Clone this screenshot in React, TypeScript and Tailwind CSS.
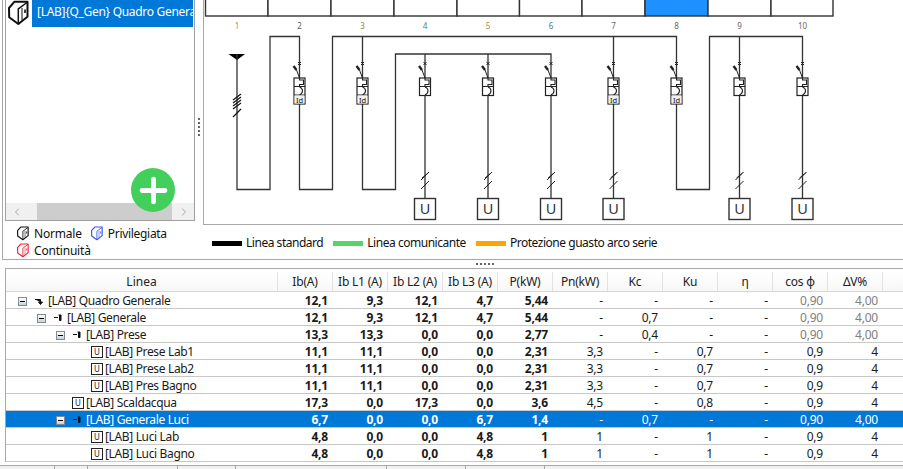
import { ChevronLeft, ChevronRight, Plus } from 'lucide-react';

const font = { fontFamily: '"Noto Sans", sans-serif' };

const colX = [237, 299.5, 362.5, 425, 488, 551, 613.5, 676.5, 739.5, 802.5];
const colEdges = [205.5, 268, 331, 394, 457, 519.5, 582, 645, 708, 771, 833];
const numColors = ['#b08a60', '#5a5a5a', '#a07c50', '#4a7a9a', '#a8864f', '#4a7a9a', '#666666', '#666666', '#666666', '#666666'];

const Breaker = ({ x, id }: { x: number; id: boolean }) => (
  <g fill="none" stroke="#222" strokeWidth={1}>
    <path d={`M${x - 1.5} 62 l3 3 M${x + 1.5} 62 l-3 3`} />
    <path d={`M${x - 6} 66 L${x - 3} 70`} strokeWidth={2.4} />
    <path d={`M${x - 3} 70 L${x} 78`} />
    <rect x={x - 5.5} y={78} width={11} height={id ? 26 : 17.5} fill="#fff" stroke="#222" strokeWidth={1.2} />
    <path d={`M${x - 5.5} 86.5 h11`} />
    <path d={`M${x} 78 v2 h4 v4.5 h-4 v2`} strokeWidth={1.1} />
    <path d={`M${x} 87 c4 1.5 4 6 0 8`} strokeWidth={1.1} />
    {id && (
      <>
        <path d={`M${x - 5.5} 95 h11`} />
        <rect x={x - 5} y={95.5} width={10} height={8} fill="#f0f0f0" stroke="none" />
        <text x={x} y={102.5} textAnchor="middle" fontSize={7.5} fill="#111" stroke="none" style={font}>
          Id
        </text>
      </>
    )}
  </g>
);

const Slashes = ({ x }: { x: number }) => (
  <path d={`M${x - 4} 180 L${x + 4} 172 M${x - 4} 189 L${x + 4} 181 M${x - 3} 178 L${x + 3} 173`} stroke="#222" strokeWidth={1} fill="none" />
);

const UserBox = ({ x }: { x: number }) => (
  <g>
    <rect x={x - 10.5} y={198.5} width={21} height={21} fill="#fff" stroke="#333" strokeWidth={1.4} />
    <text x={x} y={214} textAnchor="middle" fontSize={14} fill="#333" style={{ fontFamily: '"Liberation Sans", sans-serif' }}>
      U
    </text>
  </g>
);

const Diagram = () => (
  <svg width={699} height={224} viewBox="204 0 699 224" className="block">
    {colEdges.slice(0, -1).map((x, i) => (
      <rect key={x} x={x} y={-3} width={colEdges[i + 1] - x} height={19} fill={i === 7 ? '#1e90ff' : '#fff'} stroke="#333" strokeWidth={1.4} />
    ))}
    {colX.map((x, i) => (
      <text key={x} x={x} y={29} textAnchor="middle" fontSize={8} fill={numColors[i]} style={font}>
        {i + 1}
      </text>
    ))}
    <path d="M228.5 54 H245 L237 60 Z" fill="#000" />
    <path
      d="M237 54 V189.5 H270 V36.5 H299.5 V78 M299.5 104 V189.5 H332.5 V36.5 H676.5 V78 M362.5 36.5 V78 M362.5 104 V189.5 H395.5 V54 H551 V78 M425 54 V78 M488 54 V78 M425 95 V199 M488 95 V199 M551 95 V199 M613.5 36.5 V78 M613.5 104 V199 M676.5 104 V189.5 H709.5 V36.5 H802.5 V78 M739.5 36.5 V78 M739.5 95 V199 M802.5 95 V199"
      fill="none"
      stroke="#333"
      strokeWidth={1.3}
    />
    <path d="M233 100 L241 94 M233 103 L241 97 M233 106 L241 100 M233 109 L241 103 M233 117 L241 109" stroke="#111" strokeWidth={1.2} fill="none" />
    <Breaker x={299.5} id />
    <Breaker x={362.5} id />
    <Breaker x={425} id={false} />
    <Breaker x={488} id={false} />
    <Breaker x={551} id={false} />
    <Breaker x={613.5} id />
    <Breaker x={676.5} id />
    <Breaker x={739.5} id={false} />
    <Breaker x={802.5} id={false} />
    {[425, 488, 551, 613.5, 739.5, 802.5].map((x) => (
      <g key={x}>
        <Slashes x={x} />
        <UserBox x={x} />
      </g>
    ))}
  </svg>
);

const Cabinet = ({ color, className }: { color: string; className: string }) => (
  <svg viewBox="0 0 21 26" className={className} fill="none" stroke={color}>
    <path d="M1 8 L6.5 1.7 H19.5 V16.7 L10.3 24 L1.2 17.3 Z" strokeWidth={2} strokeLinejoin="round" />
    <path d="M10.3 23.5 V9 L19 2.5" strokeWidth={1.5} />
    <path d="M14 20 V8" strokeWidth={1} />
    <path d="M17 9.5 v3.5" strokeWidth={1.6} />
  </svg>
);

const Dots = ({ vertical }: { vertical?: boolean }) => (
  <div className={vertical ? 'flex flex-col gap-[2px]' : 'flex gap-[2px]'}>
    {[0, 1, 2, 3, 4].map((i) => (
      <span key={i} className="h-[2px] w-[2px] bg-[#666666]" />
    ))}
  </div>
);

const LegendLine = ({ color, label }: { color: string; label: string }) => (
  <div className="flex items-center gap-[4px]">
    <span className={`h-[5px] w-[30px] ${color}`} />
    <span>{label}</span>
  </div>
);

type Row = {
  name: string;
  level: number;
  leaf?: boolean;
  vals: string[];
  selected?: boolean;
  calc?: boolean;
};

const rows: Row[] = [
  { name: '[LAB] Quadro Generale', level: 0, calc: true, vals: ['12,1', '9,3', '12,1', '4,7', '5,44', '-', '-', '-', '-', '0,90', '4,00'] },
  { name: '[LAB] Generale', level: 1, calc: true, vals: ['12,1', '9,3', '12,1', '4,7', '5,44', '-', '0,7', '-', '-', '0,90', '4,00'] },
  { name: '[LAB] Prese', level: 2, calc: true, vals: ['13,3', '13,3', '0,0', '0,0', '2,77', '-', '0,4', '-', '-', '0,90', '4,00'] },
  { name: '[LAB] Prese Lab1', level: 3, leaf: true, vals: ['11,1', '11,1', '0,0', '0,0', '2,31', '3,3', '-', '0,7', '-', '0,9', '4'] },
  { name: '[LAB] Prese Lab2', level: 3, leaf: true, vals: ['11,1', '11,1', '0,0', '0,0', '2,31', '3,3', '-', '0,7', '-', '0,9', '4'] },
  { name: '[LAB] Pres Bagno', level: 3, leaf: true, vals: ['11,1', '11,1', '0,0', '0,0', '2,31', '3,3', '-', '0,7', '-', '0,9', '4'] },
  { name: '[LAB] Scaldacqua', level: 2, leaf: true, vals: ['17,3', '0,0', '17,3', '0,0', '3,6', '4,5', '-', '0,8', '-', '0,9', '4'] },
  { name: '[LAB] Generale Luci', level: 2, selected: true, calc: true, vals: ['6,7', '0,0', '0,0', '6,7', '1,4', '-', '0,7', '-', '-', '0,90', '4,00'] },
  { name: '[LAB] Luci Lab', level: 3, leaf: true, vals: ['4,8', '0,0', '0,0', '4,8', '1', '1', '-', '1', '-', '0,9', '4'] },
  { name: '[LAB] Luci Bagno', level: 3, leaf: true, vals: ['4,8', '0,0', '0,0', '4,8', '1', '1', '-', '1', '-', '0,9', '4'] },
];

const headers = ['Ib(A)', 'Ib L1 (A)', 'Ib L2 (A)', 'Ib L3 (A)', 'P(kW)', 'Pn(kW)', 'Kc', 'Ku', 'η', 'cos φ', 'ΔV%'];
const branchIndent = ['pl-[12px]', 'pl-[31px]', 'pl-[50px]'];
const leafIndent: Record<number, string> = { 2: 'pl-[66px]', 3: 'pl-[85px]' };

const Expander = () => (
  <span className="flex h-[9px] w-[9px] items-center justify-center border border-[#7d8b99] bg-gradient-to-b from-white to-[#c9d2da]">
    <span className="h-[1px] w-[5px] bg-black" />
  </span>
);

const NodeGlyph = ({ top }: { top?: boolean }) => (
  <svg width={8} height={8} viewBox="0 0 8 8" className="ml-[8px] mr-[5px] shrink-0">
    {top ? (
      <path d="M0 2.5 H5.5 V5 M3.5 5 H7.5 L5.5 7.5 Z" stroke="#111" strokeWidth={1} fill="#111" />
    ) : (
      <path d="M0 3.5 H4 M4.5 1 H7 V6.5 H5.5 V1" stroke="#111" strokeWidth={1} fill="#111" />
    )}
  </svg>
);

const LeafGlyph = () => (
  <span className="mr-[2px] flex h-[12px] w-[12px] shrink-0 items-center justify-center border border-[#222222] bg-white text-[8px] leading-none text-[#222222]">
    U
  </span>
);

const TableRow = ({ row }: { row: Row }) => (
  <div className={`flex h-[17px] items-center border-b border-[#c8c8c8] pt-[2px] ${row.selected ? 'bg-[#0078d7] text-white' : 'text-[#1a1a1a]'}`}>
    <div className={`flex w-[272px] shrink-0 items-center ${row.leaf ? leafIndent[row.level] : branchIndent[row.level]}`}>
      {row.leaf ? (
        <LeafGlyph />
      ) : (
        <>
          <Expander />
          <NodeGlyph top={row.level === 0} />
        </>
      )}
      <span className="tracking-[-0.35px]">{row.name}</span>
    </div>
    {row.vals.map((v, i) => (
      <div
        key={i}
        className={`w-[55px] shrink-0 pr-[5px] text-right tracking-[-0.2px] ${i < 5 ? 'font-bold' : ''} ${i > 8 && row.calc && !row.selected ? 'text-[#808080]' : ''}`}
      >
        {v}
      </div>
    ))}
  </div>
);

export default function App() {
  return (
    <div className="relative flex h-[469px] w-[903px] flex-col overflow-hidden bg-white text-[12px] leading-none text-[#111111]" style={font}>
      <div className="ml-[2px] flex h-[260px] shrink-0 border-b border-l border-[#a8a8a8] pl-[2px]">
        <div className="flex w-[190px] shrink-0 flex-col">
          <div className="relative flex h-[221px] shrink-0 flex-col border-x border-b border-[#a0a0a0]">
            <div className="flex-1">
              <div className="flex">
                <Cabinet color="#111111" className="ml-[2px] h-[26px] w-[21px]" />
                <div className="ml-[3px] h-[27px] w-[161px] overflow-hidden whitespace-nowrap bg-[#0078d7] pl-[5px] pt-[6px] tracking-[-0.3px] text-white">
                  [LAB]{'{'}Q_Gen{'}'} Quadro Generale
                </div>
              </div>
            </div>
            <div className="flex h-[17px] shrink-0">
              <div className="flex w-[31px] items-center bg-[#f0f0f0] pl-[5px] text-[#a6a6a6]">
                <ChevronLeft size={12} />
              </div>
              <div className="w-[135px] bg-[#cdcdcd]" />
              <div className="flex flex-1 items-center justify-end bg-[#f0f0f0] pr-[4px] text-[#a6a6a6]">
                <ChevronRight size={12} />
              </div>
            </div>
            <div className="absolute left-[125px] top-[168px] flex h-[44px] w-[44px] items-center justify-center rounded-full bg-[#43cf5c] text-white">
              <Plus size={39} strokeWidth={3} />
            </div>
          </div>
          <div className="flex flex-col gap-[2px] pl-[12px] pt-[5px]">
            <div className="flex h-[15px] items-center">
              <Cabinet color="#111111" className="h-[15px] w-[12px]" />
              <span className="ml-[5px] tracking-[-0.2px]">Normale</span>
              <Cabinet color="#3355ee" className="ml-[9px] h-[15px] w-[12px]" />
              <span className="ml-[5px] tracking-[-0.3px]">Privilegiata</span>
            </div>
            <div className="flex h-[15px] items-center">
              <Cabinet color="#ee2233" className="h-[15px] w-[12px]" />
              <span className="ml-[5px] tracking-[-0.2px]">Continuità</span>
            </div>
          </div>
        </div>
        <div className="flex w-[8px] shrink-0 items-start justify-center pt-[118px]">
          <Dots vertical />
        </div>
        <div className="flex min-w-0 flex-1 flex-col">
          <div className="h-[225px] shrink-0 border-b border-l border-[#a8a8a8]">
            <Diagram />
          </div>
          <div className="flex items-center gap-[10px] pl-[9px] pt-[12px] tracking-[-0.47px]">
            <LegendLine color="bg-black" label="Linea standard" />
            <LegendLine color="bg-[#52d56a]" label="Linea comunicante" />
            <LegendLine color="bg-[#ffa500]" label="Protezione guasto arco serie" />
          </div>
        </div>
      </div>

      <div className="flex h-[8px] shrink-0 items-center justify-center pl-[66px]">
        <Dots />
      </div>

      <div className="ml-[5px] h-[194px] shrink-0 border-y border-l border-[#a8a8a8] pt-[3px]">
        <div className="flex h-[20px] items-center border-b border-[#d8d8d8] bg-gradient-to-b from-white to-[#f7f7f7] text-[#222222]">
          <div className="flex h-full w-[272px] shrink-0 items-center justify-center border-r border-[#e2e2e2]">Linea</div>
          {headers.map((h) => (
            <div key={h} className="flex h-full w-[55px] shrink-0 items-center justify-center border-r border-[#e2e2e2] tracking-[-0.2px]">
              {h}
            </div>
          ))}
        </div>
        {rows.map((r) => (
          <TableRow key={r.name} row={r} />
        ))}
      </div>

      <div className="mt-[3px] flex flex-1 border-t border-[#a8a8a8] bg-[#f0f0f0] pl-[54px]">
        <span className="w-[33px] border-l border-[#a8a8a8]" />
        <span className="w-[90px] border-l border-[#a8a8a8]" />
        <span className="w-[58px] border-l border-[#a8a8a8]" />
        <span className="w-[151px] border-l border-[#a8a8a8]" />
        <span className="w-[79px] border-l border-[#a8a8a8]" />
        <span className="w-[79px] border-l border-[#a8a8a8]" />
        <span className="w-[79px] border-l border-[#a8a8a8]" />
      </div>
    </div>
  );
}
